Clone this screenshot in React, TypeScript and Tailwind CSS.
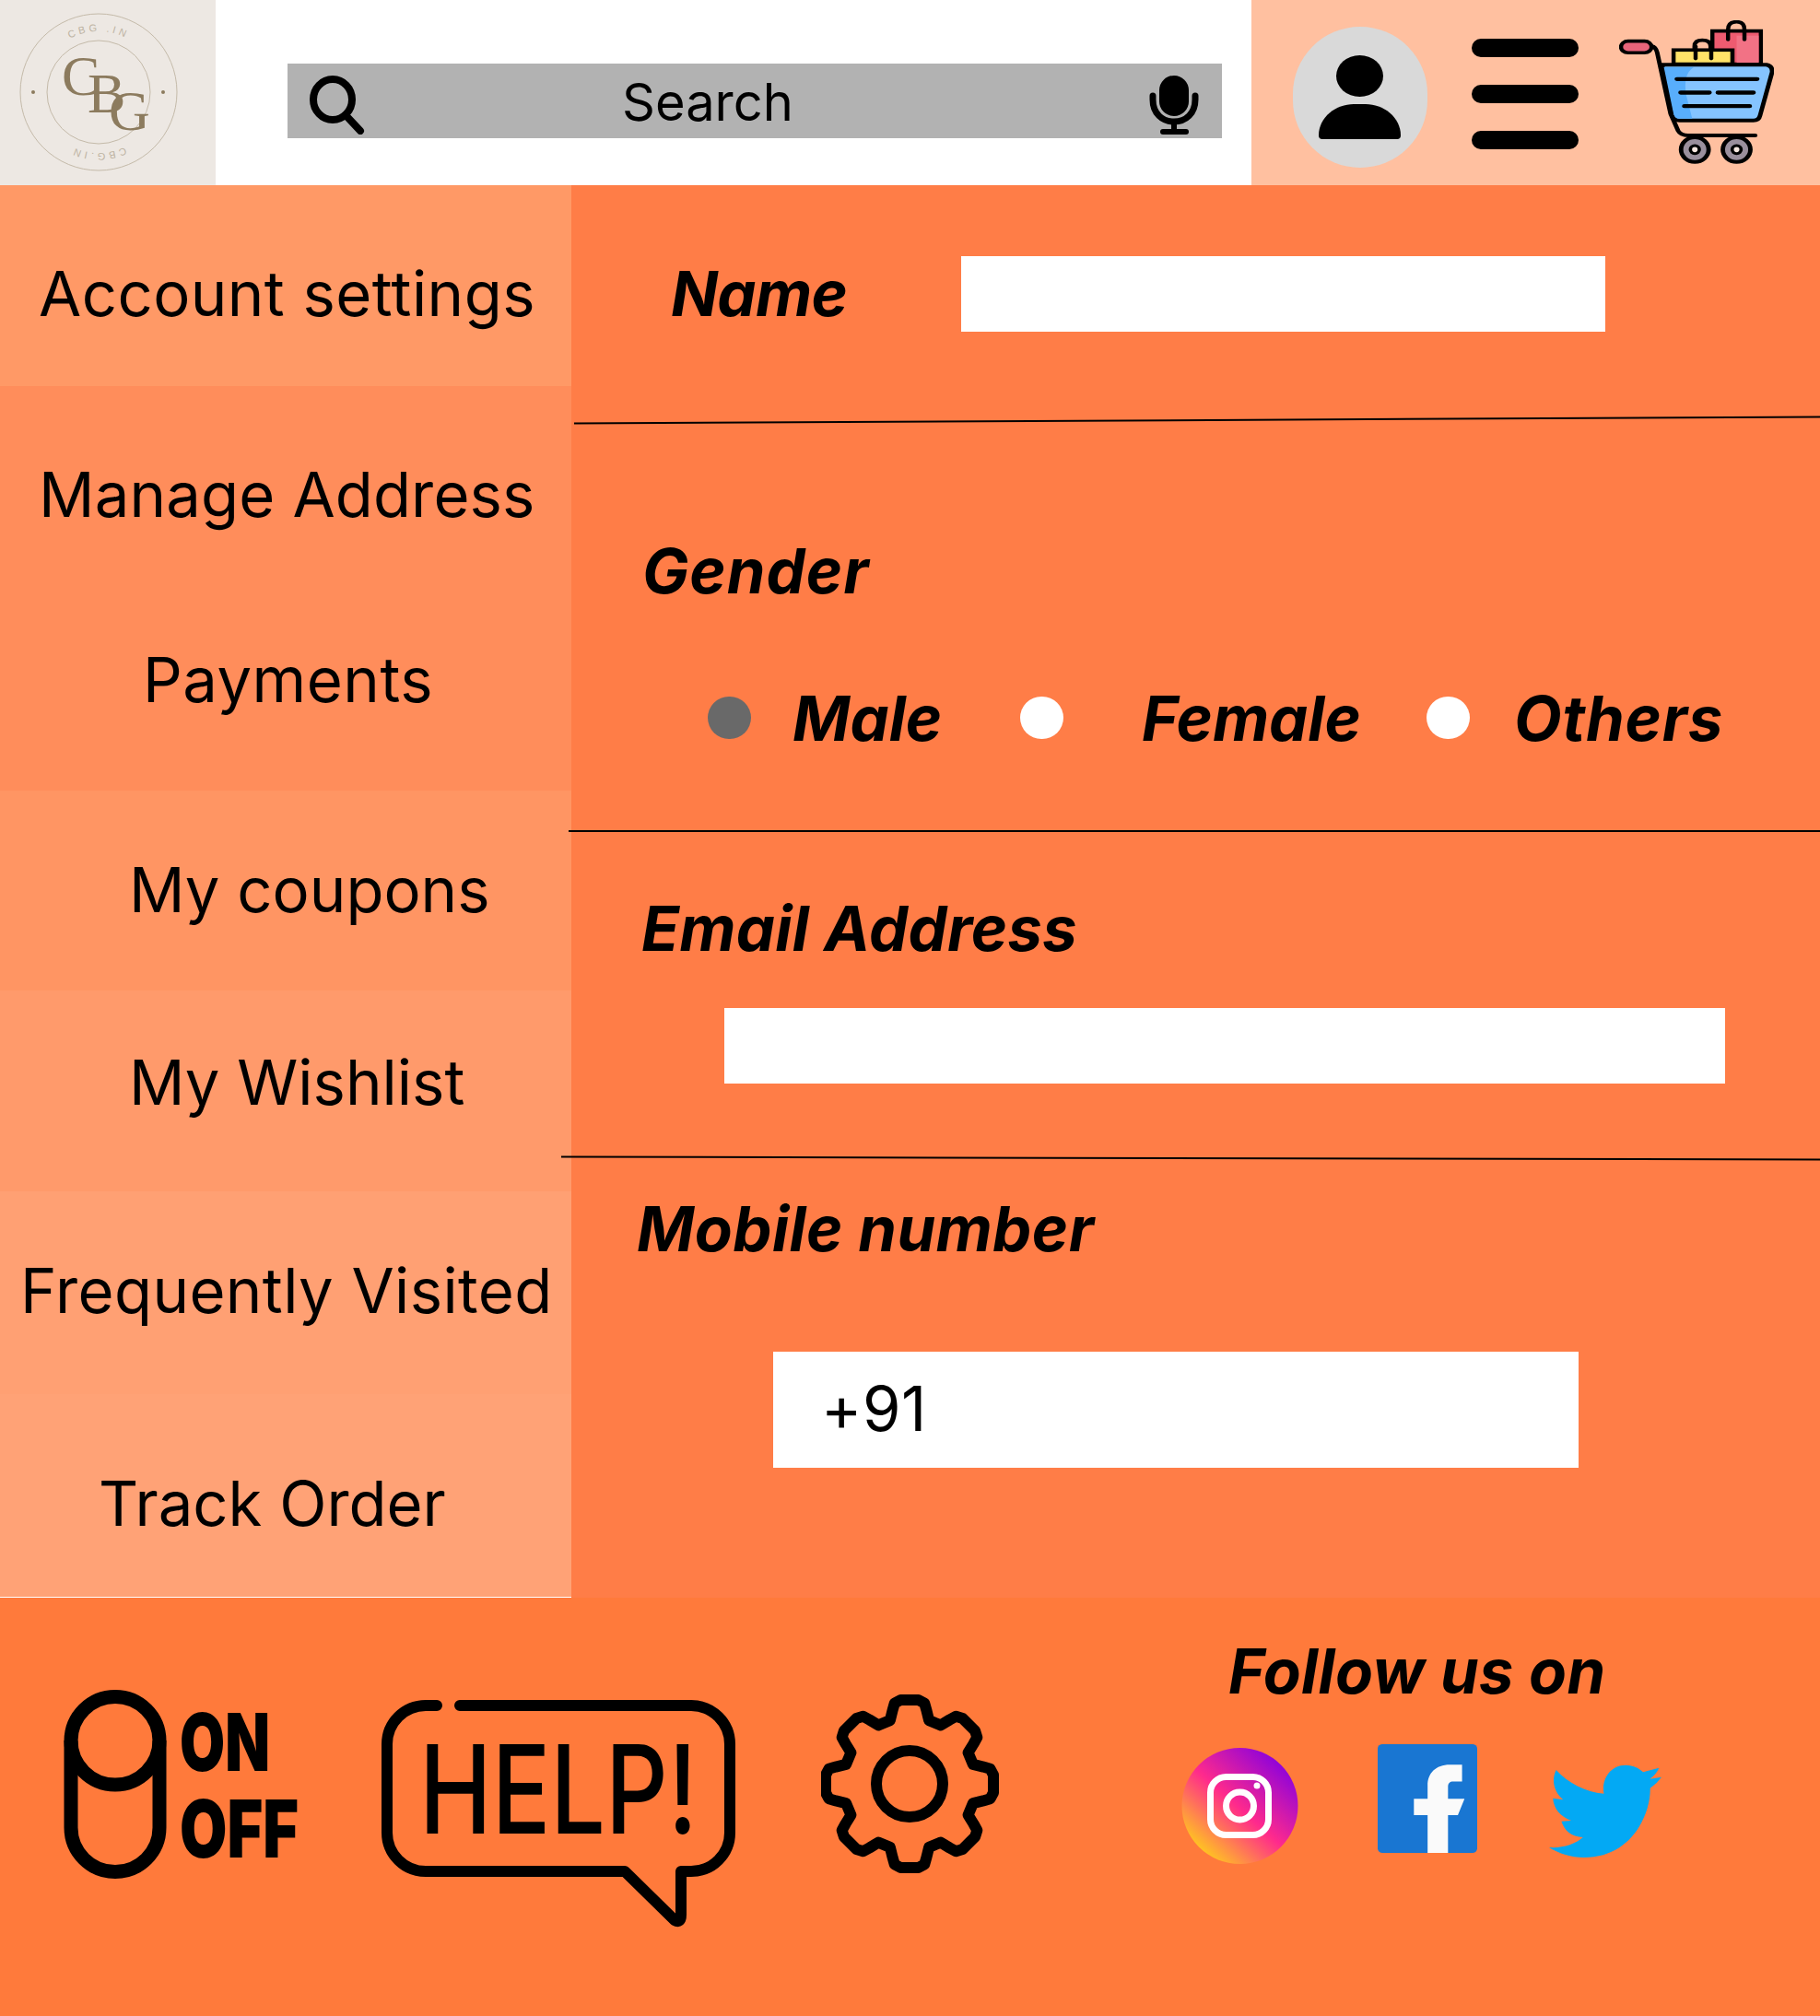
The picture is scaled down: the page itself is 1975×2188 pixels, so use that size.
import React from "react";

const SIDEBAR_ITEMS = [
  { label: "Account settings", row: "h-[218px] bg-[#ff9966] pt-[78px] pl-[42px] tracking-[0.45px]" },
  { label: "Manage Address", row: "h-[221px] bg-[#ff8d5b] pt-[78px] pl-[42px] tracking-[0.15px]" },
  { label: "Payments", row: "h-[218px] bg-[#ff8d5b] pt-[58px] pl-[155px] tracking-[0.5px]" },
  { label: "My coupons", row: "h-[217px] bg-[#ff9563] pt-[68px] pl-[140px]" },
  { label: "My Wishlist", row: "h-[218px] bg-[#ff9a6b] pt-[60px] pl-[140px]" },
  { label: "Frequently Visited", row: "h-[220px] bg-[#ffa073] pt-[68px] pl-[22px] tracking-[0.4px]" },
  { label: "Track Order", row: "h-[221px] bg-[#ffa276] pt-[79px] pl-[107px] border-b border-white" },
];

function gearPoints() {
  const cx = 987;
  const cy = 1936;
  const pts: string[] = [];
  const at = (deg: number, r: number) => {
    const a = ((deg - 90) * Math.PI) / 180;
    pts.push(`${(cx + r * Math.cos(a)).toFixed(1)},${(cy + r * Math.sin(a)).toFixed(1)}`);
  };
  for (let i = 0; i < 8; i++) {
    const a = i * 45;
    at(a - 17, 72);
    at(a - 13, 82);
    at(a - 10.5, 89);
    at(a - 6, 91.5);
    at(a + 6, 91.5);
    at(a + 10.5, 89);
    at(a + 13, 82);
    at(a + 17, 72);
  }
  return pts.join(" ");
}

function Logo() {
  return (
    <svg width="234" height="201" viewBox="0 0 234 201" className="shrink-0">
      <defs>
        <path id="logoArc" d="M 41 100 A 66 66 0 0 1 173 100" />
      </defs>
      <ellipse cx="107" cy="100" rx="85" ry="85" fill="none" stroke="#c4baa9" strokeWidth="1" />
      <ellipse cx="107" cy="100" rx="56" ry="56" fill="none" stroke="#c4baa9" strokeWidth="1" />
      <circle cx="36" cy="100" r="2" fill="#8c7b5e" />
      <circle cx="177" cy="100" r="2" fill="#8c7b5e" />
      <g fontFamily="'Liberation Serif', serif" fontSize="62" fill="#8c7b5e">
        <text x="67" y="103">C</text>
        <text x="95" y="122">B</text>
        <text x="118" y="141">G</text>
      </g>
      <g fontFamily="'Liberation Sans', sans-serif" fontSize="11" fill="#bdb3a2" letterSpacing="3.5">
        <text textAnchor="middle">
          <textPath href="#logoArc" startOffset="50%">CBG .IN</textPath>
        </text>
        <text textAnchor="middle" transform="rotate(180 107 100)">
          <textPath href="#logoArc" startOffset="50%">CBG.IN</textPath>
        </text>
      </g>
    </svg>
  );
}

function SearchIcon() {
  return (
    <svg width="60" height="64" viewBox="336 82 60 64" className="ml-[24px] mt-[13px] shrink-0 self-start">
      <ellipse cx="361" cy="108" rx="21" ry="22" fill="none" stroke="#000" strokeWidth="8" />
      <path d="M376 126 L391 142" stroke="#000" strokeWidth="8" strokeLinecap="round" />
    </svg>
  );
}

function MicIcon() {
  return (
    <svg width="54" height="64" viewBox="1247 82 54 64" className="ml-auto mr-[25px] mt-[13px] shrink-0 self-start">
      <rect x="1258" y="82" width="32" height="44" rx="16" fill="#000" />
      <path d="M1251 104 V108 C1251 123 1261 132 1274 132 C1287 132 1297 123 1297 108 V104" fill="none" stroke="#000" strokeWidth="7" strokeLinecap="round" />
      <path d="M1274 132 V143" stroke="#000" strokeWidth="6" />
      <path d="M1262 143 H1287" stroke="#000" strokeWidth="6" strokeLinecap="round" />
    </svg>
  );
}

function UserAvatar() {
  return (
    <div className="mt-[29px] ml-[45px] flex h-[153px] w-[146px] shrink-0 items-center justify-center rounded-full bg-[#d9d9d9]">
      <svg width="90" height="92" viewBox="1431 60 90 92">
        <ellipse cx="1475.5" cy="82.5" rx="25.5" ry="22.5" fill="#000" />
        <path d="M1431 147 C1431 127 1450 113 1469 113 H1482 C1501 113 1520 127 1520 147 Q1520 151 1516 151 H1435 Q1431 151 1431 147 Z" fill="#000" />
      </svg>
    </div>
  );
}

function CartIcon() {
  return (
    <svg width="168" height="158" viewBox="1030 65 415 475" preserveAspectRatio="none" className="ml-[44px] mt-[22px] shrink-0">
      <path d="M1118 150 Q1128 152 1132 170 L1168 370 L1188 425 Q1195 441 1215 441 H1395" fill="none" stroke="#000" strokeWidth="12" strokeLinecap="round" />
      <rect x="1035" y="133" width="82" height="38" rx="19" fill="#e8647a" stroke="#000" strokeWidth="11" />
      <path d="M1232 160 V150 Q1232 130 1253 130 Q1275 130 1275 150 V160" fill="none" stroke="#000" strokeWidth="11" />
      <rect x="1176" y="162" width="158" height="46" fill="#ffe368" stroke="#000" strokeWidth="11" />
      <path d="M1280 100 H1410 V208 H1334 V162 H1280 Z" fill="#ee5b70" stroke="#000" strokeWidth="11" />
      <path d="M1345 115 H1404 V204 H1345 Z" fill="#f27285" />
      <path d="M1322 128 V95 Q1322 70 1345 70 Q1366 70 1366 95 V128" fill="none" stroke="#000" strokeWidth="11" strokeLinecap="round" />
      <path d="M1235 190 V150" stroke="#000" strokeWidth="11" strokeLinecap="round" />
      <path d="M1277 190 V150" stroke="#000" strokeWidth="11" strokeLinecap="round" />
      <path d="M1145 210 H1425 Q1442 214 1440 235 L1408 375 Q1405 392 1390 392 H1192 Q1176 392 1172 375 Z" fill="#85c4ff" stroke="#000" strokeWidth="12" strokeLinejoin="round" />
      <path d="M1150 218 H1230 Q1200 240 1210 310 L1226 386 H1190 Q1180 386 1176 370 Z" fill="#58aefc" />
      <path d="M1185 257 H1400 M1195 301 H1272 M1295 301 H1390 M1205 345 H1380" stroke="#000" strokeWidth="13" strokeLinecap="round" />
      <ellipse cx="1233" cy="487" rx="37" ry="40" fill="#9a8f9c" stroke="#000" strokeWidth="12" />
      <ellipse cx="1233" cy="487" rx="12" ry="13" fill="#f7e8e0" stroke="#000" strokeWidth="9" />
      <ellipse cx="1345" cy="487" rx="37" ry="40" fill="#9a8f9c" stroke="#000" strokeWidth="12" />
      <ellipse cx="1345" cy="487" rx="12" ry="13" fill="#f7e8e0" stroke="#000" strokeWidth="9" />
    </svg>
  );
}

function OnOffIcon() {
  return (
    <svg width="251" height="205" viewBox="70 1834 251 205" className="mt-[100px] ml-[70px] shrink-0 overflow-visible">
      <rect x="77" y="1841.5" width="96" height="190" rx="48" fill="none" stroke="#000" strokeWidth="15" />
      <path d="M77 1889 A48 48 0 0 0 173 1889" fill="none" stroke="#000" strokeWidth="15" />
      <g fontFamily="Inter, sans-serif" fontWeight="900" fontSize="87" fill="#000">
        <text x="195" y="1922" textLength="98" lengthAdjust="spacingAndGlyphs">ON</text>
        <text x="195" y="2016" textLength="129" lengthAdjust="spacingAndGlyphs">OFF</text>
      </g>
    </svg>
  );
}

function HelpIcon() {
  return (
    <svg width="384" height="245" viewBox="414 1845 384 245" className="mt-[111px] ml-[93px] shrink-0 overflow-visible">
      <path
        d="M474 1851 H462 A42 42 0 0 0 420 1893 V1989 A42 42 0 0 0 462 2031 H678 L732 2084 Q739 2088 739 2078 V2031 H750 A42 42 0 0 0 792 1989 V1893 A42 42 0 0 0 750 1851 H499"
        fill="none"
        stroke="#000"
        strokeWidth="12"
        strokeLinecap="round"
        strokeLinejoin="round"
      />
      <text x="455" y="1990" fontFamily="Inter, sans-serif" fontWeight="500" fontSize="133" fill="#000" textLength="302" lengthAdjust="spacingAndGlyphs">
        HELP!
      </text>
    </svg>
  );
}

function GearIcon() {
  return (
    <svg width="193" height="196" viewBox="891 1838 193 196" className="mt-[104px] ml-[93px] shrink-0">
      <polygon points={gearPoints()} fill="none" stroke="#000" strokeWidth="12" strokeLinejoin="round" />
      <circle cx="987" cy="1936" r="36" fill="none" stroke="#000" strokeWidth="12" />
    </svg>
  );
}

function InstagramIcon() {
  return (
    <svg width="127" height="126" viewBox="0 0 127 126" className="mt-[44px] shrink-0">
      <defs>
        <linearGradient id="igBg" x1="0.12" y1="0.95" x2="0.88" y2="0.1">
          <stop offset="0" stopColor="#ffdd10" />
          <stop offset="0.5" stopColor="#ff2a8c" />
          <stop offset="1" stopColor="#8600e0" />
        </linearGradient>
      </defs>
      <circle cx="63.5" cy="63" r="63" fill="url(#igBg)" />
      <rect x="31.5" y="31.5" width="63" height="63" rx="17" fill="none" stroke="#fff" strokeWidth="7" />
      <circle cx="63.5" cy="63" r="15" fill="none" stroke="#fff" strokeWidth="7" />
      <circle cx="82" cy="41" r="3.5" fill="#fff" />
    </svg>
  );
}

function FacebookIcon() {
  return (
    <svg width="108" height="118" viewBox="665 400 283 355" preserveAspectRatio="none" className="mt-[40px] ml-[86px] shrink-0">
      <rect x="665" y="400" width="283" height="355" rx="14" fill="#1976d2" />
      <path d="M905 467 H870 C830 467 807 495 807 535 V578 H768 V632 H807 V755 H865 V632 H893 L912 578 H865 V540 C865 528 870 522 880 522 H905 Z" fill="#fafafa" />
    </svg>
  );
}

function TwitterIcon() {
  return (
    <svg width="122" height="101" viewBox="1152 465 318 303" preserveAspectRatio="none" className="mt-[62px] ml-[78px] shrink-0">
      <path
        d="M1418 490 L1463 476 Q1455 498 1437 512 L1470 506 Q1458 526 1438 542 C1440 620 1390 768 1250 768 C1215 768 1180 755 1152 735 C1190 738 1225 725 1248 702 C1215 700 1195 680 1187 650 L1215 648 C1185 635 1165 610 1163 575 L1192 580 C1165 555 1158 515 1172 483 C1205 525 1255 555 1307 560 C1300 520 1320 467 1370 467 C1390 467 1408 478 1418 490 Z"
        fill="#03a9f4"
      />
    </svg>
  );
}

export default function App() {
  return (
    <div className="h-[2188px] w-[1975px] overflow-hidden bg-[#ff7a3b] font-[Inter,sans-serif] text-black">
      {/* Header */}
      <header className="flex h-[201px]">
        <div className="w-[234px] shrink-0 bg-[#ede8e3]">
          <Logo />
        </div>
        <div className="flex-1 bg-white pl-[78px] pt-[69px]">
          <div className="flex h-[81px] w-[1014px] items-center bg-[#b2b2b2]">
            <SearchIcon />
            <span className="ml-[279px] mt-[3px] text-[56px] leading-[60px]">Search</span>
            <MicIcon />
          </div>
        </div>
        <div className="flex w-[617px] shrink-0 bg-[#ffc0a0]">
          <UserAvatar />
          <div className="ml-[48px] mt-[42px] flex flex-col gap-[30px]">
            <div className="h-[20px] w-[116px] rounded-full bg-black" />
            <div className="h-[20px] w-[116px] rounded-full bg-black" />
            <div className="h-[20px] w-[116px] rounded-full bg-black" />
          </div>
          <CartIcon />
        </div>
      </header>

      <div className="flex h-[1533px]">
        {/* Sidebar */}
        <nav className="w-[620px] shrink-0">
          {SIDEBAR_ITEMS.map((item) => (
            <div key={item.label} className={item.row}>
              <span className="block text-[67px] leading-[80px] whitespace-nowrap">{item.label}</span>
            </div>
          ))}
        </nav>

        {/* Profile form */}
        <main className="flex-1 bg-[#ff7d47] text-[67px] leading-[80px] font-bold italic">
          <section className="flex h-[254px] items-start pt-[77px]">
            <label className="ml-[108px] mt-[1px] w-[315px] tracking-[-0.7px]">Name</label>
            <input readOnly className="h-[82px] w-[699px] bg-white" />
          </section>
          <div className="ml-[3px] h-[1.5px] bg-black -rotate-[0.3deg]" />

          <section className="h-[444px] pt-[123px]">
            <div className="ml-[77px] tracking-[1px]">Gender</div>
            <div className="mt-[79px] flex h-[80px] items-center pl-[148px]">
              <span className="h-[46px] w-[47px] rounded-full bg-[#696969]" />
              <span className="ml-[45px] mt-[2px] w-[247px]">Male</span>
              <span className="h-[46px] w-[47px] rounded-full bg-white" />
              <span className="ml-[85px] mt-[2px] w-[309px]">Female</span>
              <span className="h-[46px] w-[47px] rounded-full bg-white" />
              <span className="ml-[48px] mt-[2px] tracking-[0.8px]">Others</span>
            </div>
          </section>
          <div className="-ml-[3px] h-[2px] bg-black" />

          <section className="h-[353px] pt-[65px]">
            <div className="ml-[76px] tracking-[0.25px]">Email Address</div>
            <input readOnly className="ml-[166px] mt-[46px] block h-[82px] w-[1086px] bg-white" />
          </section>
          <div className="-ml-[11px] h-[1.5px] bg-black rotate-[0.126deg]" />

          <section className="pt-[37px]">
            <div className="ml-[71px] tracking-[0.4px]">Mobile number</div>
            <input
              readOnly
              value="+91"
              className="ml-[219px] mt-[93px] block h-[126px] w-[874px] bg-white pb-[3px] pl-[52px] text-[67px] tracking-[0.6px] font-normal not-italic"
            />
          </section>
        </main>
      </div>

      {/* Footer */}
      <footer className="flex h-[454px] items-start">
        <OnOffIcon />
        <HelpIcon />
        <GearIcon />
        <div className="ml-[198px] mt-[40px]">
          <div className="ml-[51px] text-[67px] leading-[80px] font-bold italic whitespace-nowrap tracking-[0.3px]">Follow us on</div>
          <div className="-mt-[1px] flex items-start">
            <InstagramIcon />
            <FacebookIcon />
            <TwitterIcon />
          </div>
        </div>
      </footer>
    </div>
  );
}
